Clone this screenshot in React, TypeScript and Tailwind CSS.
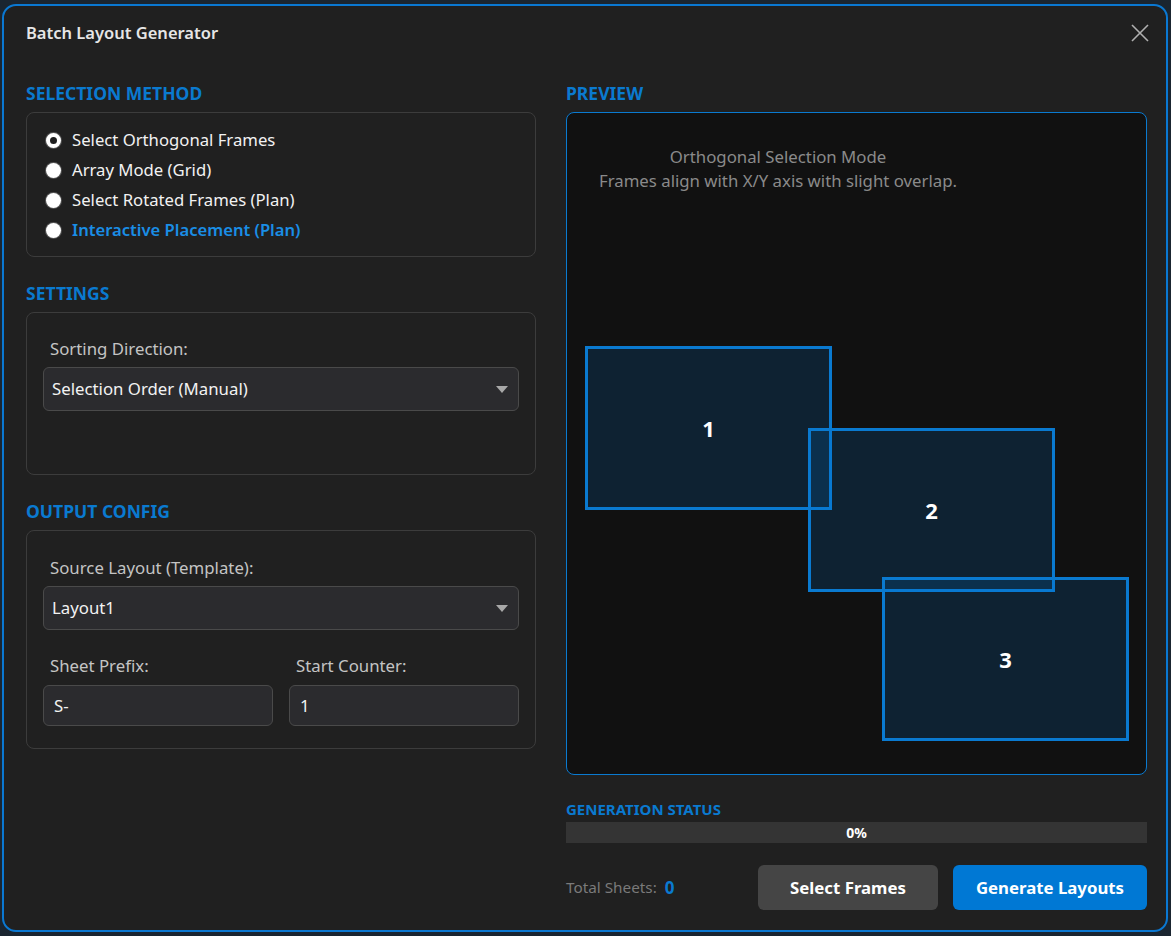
import React from "react";

const FONT = { fontFamily: '"Noto Sans", "Open Sans", sans-serif' };

function Radio({ checked, label, accent }: { checked?: boolean; label: string; accent?: boolean }) {
  return (
    <div className="flex items-center h-[30px]">
      {checked ? (
        <span className="w-[15px] h-[15px] rounded-full border-[4px] border-white bg-[#1e1e1e] shadow-[0_0_0_1px_#555]" />
      ) : (
        <span className="w-[15px] h-[15px] rounded-full bg-white shadow-[0_0_0_1px_#555]" />
      )}
      <span
        className={
          accent
            ? "ml-[11px] text-[16.6px] font-semibold text-[#1a8ee6]"
            : "ml-[11px] text-[16.7px] text-[#f2f2f2]"
        }
      >
        {label}
      </span>
    </div>
  );
}

function Heading({ children }: { children: React.ReactNode }) {
  return <div className="h-[20px] leading-[20px] text-[17.5px] font-bold text-[#0a7ad0]">{children}</div>;
}

function SelectBox({ value }: { value: string }) {
  return (
    <div className="h-[44px] rounded-[6px] border border-[#4a4a4a] bg-[#2b2b2e] flex items-center justify-between pl-[8px] pr-[10px]">
      <span className="text-[16.8px] text-[#f2f2f2]">{value}</span>
      <svg width="12" height="7" viewBox="0 0 12 7">
        <path d="M0 0 L12 0 L6 7 Z" fill="#a8a8a8" />
      </svg>
    </div>
  );
}

function InputBox({ value }: { value: string }) {
  return (
    <div className="h-[41px] rounded-[6px] border border-[#4a4a4a] bg-[#2b2b2e] flex items-center pl-[10px]">
      <span className="text-[16.8px] text-[#f2f2f2]">{value}</span>
    </div>
  );
}

function Frame({ n, left, top }: { n: number; left: number; top: number }) {
  return (
    <div
      className="absolute w-[247px] h-[164px] border-[3px] border-[#0a7ad0] bg-[rgba(0,120,212,0.17)] flex items-center justify-center"
      style={{ left, top }}
    >
      <span className="text-[22px] font-bold text-white">{n}</span>
    </div>
  );
}

export default function App() {
  return (
    <div className="w-[1171px] h-[936px] bg-[#1a2530] pl-[2px] pt-[4px] pr-[3px] pb-[4px]" style={FONT}>
      <div className="w-full h-full rounded-[14px] border-2 border-[#0a78d2] bg-[#202020] flex flex-col pl-[22px] pr-[19px]">
        <div className="h-[54px] flex items-center justify-between">
          <span className="text-[16.5px] font-semibold text-[#e6e6e6]">Batch Layout Generator</span>
          <svg width="18" height="18" viewBox="0 0 18 18" className="mr-[-2px]">
            <path d="M1 1 L17 17 M17 1 L1 17" stroke="#b0b0b0" strokeWidth="1.6" />
          </svg>
        </div>
        <div className="mt-[23px] flex gap-[30px]">
          {/* Left column */}
          <div className="w-[510px] flex flex-col">
            <Heading>SELECTION METHOD</Heading>
            <div className="mt-[9px] rounded-[8px] border border-[#3c3c3c] pl-[19px] pt-[12px] pb-[11px]">
              <Radio checked label="Select Orthogonal Frames" />
              <Radio label="Array Mode (Grid)" />
              <Radio label="Select Rotated Frames (Plan)" />
              <Radio accent label="Interactive Placement (Plan)" />
            </div>

            <div className="mt-[26px]">
              <Heading>SETTINGS</Heading>
            </div>
            <div className="mt-[9px] h-[163px] rounded-[8px] border border-[#3c3c3c] px-[16px] pt-[26px]">
              <div className="pl-[7px] h-[20px] leading-[20px] text-[16.8px] text-[#c4c4c4]">Sorting Direction:</div>
              <div className="mt-[8px]">
                <SelectBox value="Selection Order (Manual)" />
              </div>
            </div>

            <div className="mt-[26px]">
              <Heading>OUTPUT CONFIG</Heading>
            </div>
            <div className="mt-[9px] rounded-[8px] border border-[#3c3c3c] px-[16px] pt-[27px] pb-[22px]">
              <div className="pl-[7px] h-[20px] leading-[20px] text-[16.8px] text-[#c4c4c4]">Source Layout (Template):</div>
              <div className="mt-[8px]">
                <SelectBox value="Layout1" />
              </div>
              <div className="mt-[26px] grid grid-cols-2 gap-[16px]">
                <div>
                  <div className="pl-[7px] h-[20px] leading-[20px] text-[16.8px] text-[#c4c4c4]">Sheet Prefix:</div>
                  <div className="mt-[9px]">
                    <InputBox value="S-" />
                  </div>
                </div>
                <div>
                  <div className="pl-[7px] h-[20px] leading-[20px] text-[16.8px] text-[#c4c4c4]">Start Counter:</div>
                  <div className="mt-[9px]">
                    <InputBox value="1" />
                  </div>
                </div>
              </div>
            </div>
          </div>

          {/* Right column */}
          <div className="w-[581px] flex flex-col">
            <Heading>PREVIEW</Heading>
            <div className="mt-[9px] h-[663px] relative rounded-[8px] border border-[#0a7ad0] bg-[#111111]">
              <div className="absolute left-[0px] w-[422px] top-[32px] text-center text-[16.8px] leading-[24px] text-[#8a8a8a]">
                <div>Orthogonal Selection Mode</div>
                <div>Frames align with X/Y axis with slight overlap.</div>
              </div>
              <Frame n={1} left={18} top={233} />
              <Frame n={2} left={241} top={315} />
              <Frame n={3} left={315} top={464} />
            </div>
            <div className="mt-[25px] h-[18px] leading-[18px] text-[15px] font-bold text-[#0a7ad0]">GENERATION STATUS</div>
            <div className="mt-[4px] h-[21px] bg-[#343434] flex items-center justify-center">
              <span className="text-[14px] font-bold text-white">0%</span>
            </div>
            <div className="mt-[22px] flex items-center">
              <span className="text-[15.3px] text-[#7a7a7a]">Total Sheets:</span>
              <span className="ml-[8px] text-[17px] font-bold text-[#0a7ad0]">0</span>
              <div className="ml-auto flex gap-[15px]">
                <div className="w-[180px] h-[45px] rounded-[6px] bg-[#454545] flex items-center justify-center text-[16.8px] font-bold text-white">
                  Select Frames
                </div>
                <div className="w-[194px] h-[45px] rounded-[6px] bg-[#0078d4] flex items-center justify-center text-[16.8px] font-bold text-white">
                  Generate Layouts
                </div>
              </div>
            </div>
          </div>
        </div>
      </div>
    </div>
  );
}
